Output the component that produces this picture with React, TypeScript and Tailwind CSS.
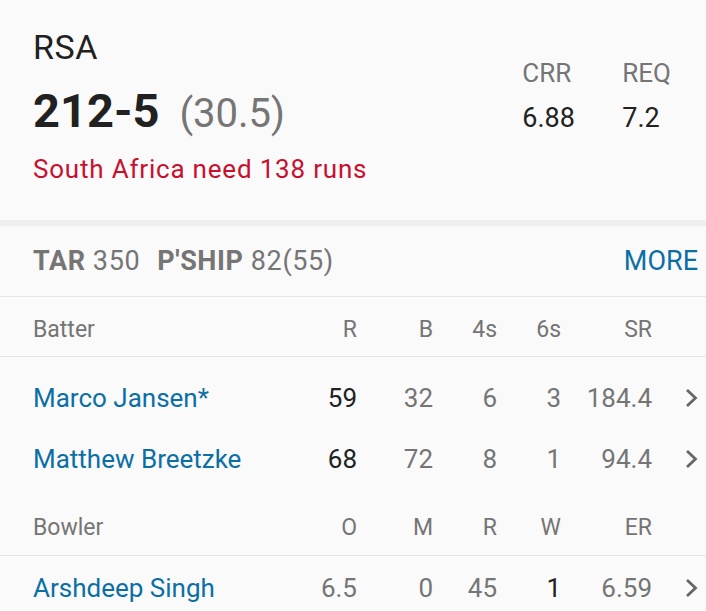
import React from "react";

const blue = "text-[#0b6fa6]";

const Chevron = () => (
  <svg width="16" height="24" viewBox="0 0 16 24" className="text-[#666666]">
    <polyline points="3,4 11.5,12 3,20" fill="none" stroke="currentColor" strokeWidth="2.8" />
  </svg>
);

type Row = { name: string; cells: string[]; dark: number[] };

const batters: Row[] = [
  { name: "Marco Jansen*", cells: ["59", "32", "6", "3", "184.4"], dark: [0] },
  { name: "Matthew Breetzke", cells: ["68", "72", "8", "1", "94.4"], dark: [0] },
];

const bowlers: Row[] = [
  { name: "Arshdeep Singh", cells: ["6.5", "0", "45", "1", "6.59"], dark: [3] },
];

const colW = ["w-[60px]", "w-[76px]", "w-[64px]", "w-[64px]", "w-[91px]"];

const HeaderRow = ({ label, cols, extra }: { label: string; cols: string[]; extra: string }) => (
  <div className={`flex items-center pl-[33px] text-[23px] text-[#757575] border-b border-[#e6e6e6] ${extra}`}>
    <div className="flex-1">{label}</div>
    {cols.map((c, i) => (
      <div key={i} className={`${colW[i]} text-right`}>
        {c}
      </div>
    ))}
    <div className="w-[54px]" />
  </div>
);

const DataRow = ({ row, h }: { row: Row; h: string }) => (
  <div className={`flex items-center ${h} pl-[33px] text-[26px]`}>
    <div className={`flex-1 ${blue}`}>{row.name}</div>
    {row.cells.map((c, i) => (
      <div
        key={i}
        className={`${colW[i]} text-right ${row.dark.includes(i) ? "text-[#212121]" : "text-[#757575]"}`}
      >
        {c}
      </div>
    ))}
    <div className="w-[54px] flex justify-end pr-[6px]">
      <Chevron />
    </div>
  </div>
);

export default function App() {
  return (
    <div className="w-[706px] h-[611px] overflow-hidden bg-[#fafafa] font-['Roboto',sans-serif] leading-none">
      <div className="h-[220px] flex pl-[33px] pr-[35px]">
        <div className="flex-1 pt-[30px]">
          <div className="text-[34px] tracking-[0.5px] text-[#212121]">RSA</div>
          <div className="mt-[23px] flex items-baseline">
            <span className="text-[47px] font-bold text-[#212121]">212-5</span>
            <span className="ml-[20px] text-[40px] text-[#757575]">(30.5)</span>
          </div>
          <div className="mt-[22px] text-[26px] tracking-[0.8px] text-[#c8102e]">South Africa need 138 runs</div>
        </div>
        <div className="flex pt-[60px]">
          <div className="w-[100px]">
            <div className="text-[26px] text-[#757575]">CRR</div>
            <div className="mt-[19px] text-[27px] text-[#212121]">6.88</div>
          </div>
          <div>
            <div className="text-[26px] text-[#757575]">REQ</div>
            <div className="mt-[19px] text-[27px] text-[#212121]">7.2</div>
          </div>
        </div>
      </div>
      <div className="h-[6px] bg-[#eceef0]" />
      <div className="h-[71px] flex items-center justify-between pl-[33px] pr-[8px] border-b border-[#e6e6e6] text-[27px] tracking-[0.6px] text-[#757575]">
        <div>
          <span className="font-bold">TAR</span> 350
          <span className="ml-[17px] font-bold">P'SHIP</span> 82(55)
        </div>
        <div className={`${blue} tracking-normal`}>MORE</div>
      </div>
      <HeaderRow label="Batter" cols={["R", "B", "4s", "6s", "SR"]} extra="h-[60px] pt-[6px]" />
      <div className="pt-[10px]">
        {batters.map((b) => (
          <DataRow key={b.name} row={b} h="h-[61px]" />
        ))}
      </div>
      <HeaderRow label="Bowler" cols={["O", "M", "R", "W", "ER"]} extra="h-[67px] pt-[10px]" />
      {bowlers.map((b) => (
        <DataRow key={b.name} row={b} h="h-[64px]" />
      ))}
    </div>
  );
}
